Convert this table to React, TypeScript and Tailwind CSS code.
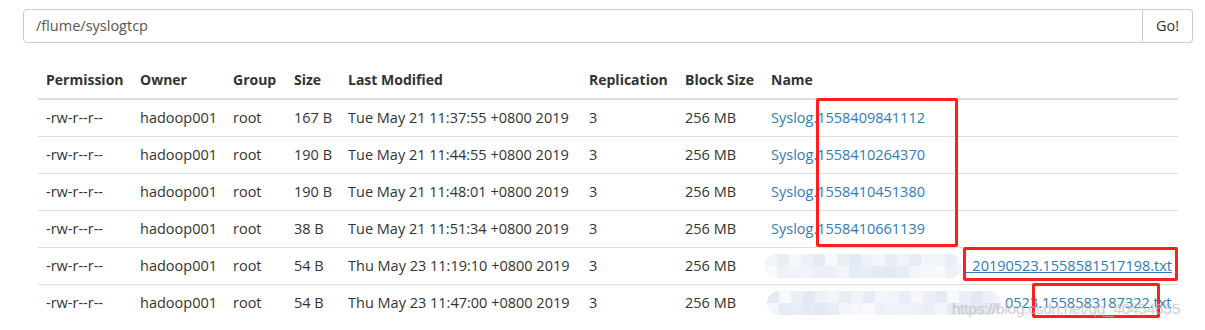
import React from "react";

const rows = [
  { size: "167 B", date: "Tue May 21 11:37:55 +0800 2019", name: "Syslog.1558409841112" },
  { size: "190 B", date: "Tue May 21 11:44:55 +0800 2019", name: "Syslog.1558410264370" },
  { size: "190 B", date: "Tue May 21 11:48:01 +0800 2019", name: "Syslog.1558410451380" },
  { size: "38 B", date: "Tue May 21 11:51:34 +0800 2019", name: "Syslog.1558410661139" },
  { size: "54 B", date: "Thu May 23 11:19:10 +0800 2019", name: "" },
  { size: "54 B", date: "Thu May 23 11:47:00 +0800 2019", name: "" },
];

const mosaic = ["#f1f4fa", "#e9eef6", "#f5f7fb", "#edf1f7", "#e5ebf4", "#f8f9fc", "#ebf0f7", "#e3e9f3", "#eef2f8", "#f3f5fa", "#e8edf5", "#f0f3f9", "#e6ecf5", "#f2f5f9"];

function Blur({ w, shift }: { w: number; shift: number }) {
  const cells = Math.ceil(w / 12);
  return (
    <div className="flex flex-col rounded-full overflow-hidden" style={{ width: w }}>
      <div className="flex h-[12px]">
        {Array.from({ length: cells }).map((_, i) => (
          <div key={i} className="w-[12px] h-[12px] shrink-0" style={{ background: mosaic[(i + shift) % mosaic.length] }} />
        ))}
      </div>
      <div className="flex h-[12px]">
        {Array.from({ length: cells }).map((_, i) => (
          <div key={i} className="w-[12px] h-[12px] shrink-0" style={{ background: mosaic[(i * 3 + shift + 5) % mosaic.length] }} />
        ))}
      </div>
    </div>
  );
}

const td = "px-[8px] py-[8px] whitespace-nowrap";

export default function App() {
  return (
    <div
      className="relative w-[1205px] h-[330px] bg-white text-[#333] text-[14.5px] leading-[20px] overflow-hidden"
      style={{ fontFamily: '"Open Sans", "Noto Sans", sans-serif' }}
    >
      <div className="pt-[9px] pl-[23px] pr-[12px]">
        <div className="flex h-[34px] w-[1170px]">
          <div className="flex-1 border border-[#ccc] rounded-l-[4px] px-[12px] flex items-center text-[#555]">
            /flume/syslogtcp
          </div>
          <div className="w-[50px] border border-l-0 border-[#ccc] rounded-r-[4px] flex items-center justify-center text-[#333]">
            Go!
          </div>
        </div>
      </div>
      <div className="pl-[38px] mt-[19px]">
        <table className="table-fixed border-collapse w-[1140px]">
          <colgroup>
            <col className="w-[94px]" />
            <col className="w-[93px]" />
            <col className="w-[61px]" />
            <col className="w-[54px]" />
            <col className="w-[241px]" />
            <col className="w-[96px]" />
            <col className="w-[86px]" />
            <col className="w-[415px]" />
          </colgroup>
          <thead>
            <tr className="border-b-2 border-[#ddd]">
              {["Permission", "Owner", "Group", "Size", "Last Modified", "Replication", "Block Size", "Name"].map((h) => (
                <th key={h} className="text-left font-bold text-[14px] px-[8px] py-[8px] whitespace-nowrap">
                  {h}
                </th>
              ))}
            </tr>
          </thead>
          <tbody>
            {rows.map((r, i) => (
              <tr key={i} className={i < rows.length - 1 ? "border-b border-[#ddd]" : ""}>
                <td className={td}>-rw-r--r--</td>
                <td className={td}>hadoop001</td>
                <td className={td}>root</td>
                <td className={td}>{r.size}</td>
                <td className={td}>{r.date}</td>
                <td className={td}>3</td>
                <td className={td}>256 MB</td>
                <td className={`${td} text-[#337ab7]`}>
                  {i < 4 && <span>{r.name}</span>}
                  {i === 4 && (
                    <div className="flex items-center h-[20px]">
                      <div className="ml-[-6px]"><Blur w={197} shift={0} /></div>
                      <span className="ml-[4px] underline">_20190523.1558581517198.txt</span>
                    </div>
                  )}
                  {i === 5 && (
                    <div className="flex items-center h-[20px]">
                      <div className="ml-[-4px]"><Blur w={234} shift={4} /></div>
                      <span className="ml-[4px]">0523.1558583187322.txt</span>
                    </div>
                  )}
                </td>
              </tr>
            ))}
          </tbody>
        </table>
      </div>

      {/* red annotation boxes */}
      <div className="absolute left-[816px] top-[98px] w-[142px] h-[149px] border-[3px] border-[#ff1f1f] rounded-[2px]" />
      <div className="absolute left-[963px] top-[247px] w-[215px] h-[34px] border-[3px] border-[#ff1f1f] rounded-[2px]" />
      <div className="absolute left-[1032px] top-[283px] w-[128px] h-[35px] border-[3px] border-[#ff1f1f] rounded-[2px]" />

      {/* watermark */}
      <div
        className="absolute left-[952px] top-[299px] text-[15.5px] leading-[20px] tracking-[-0.3px] text-[rgba(205,205,205,0.6)] whitespace-nowrap"
        style={{ fontFamily: '"Liberation Sans", Arial, sans-serif', textShadow: "0 0 1px rgba(120,120,120,0.3)" }}
      >
        https://blog.csdn.net/qq_40454655
      </div>
    </div>
  );
}
